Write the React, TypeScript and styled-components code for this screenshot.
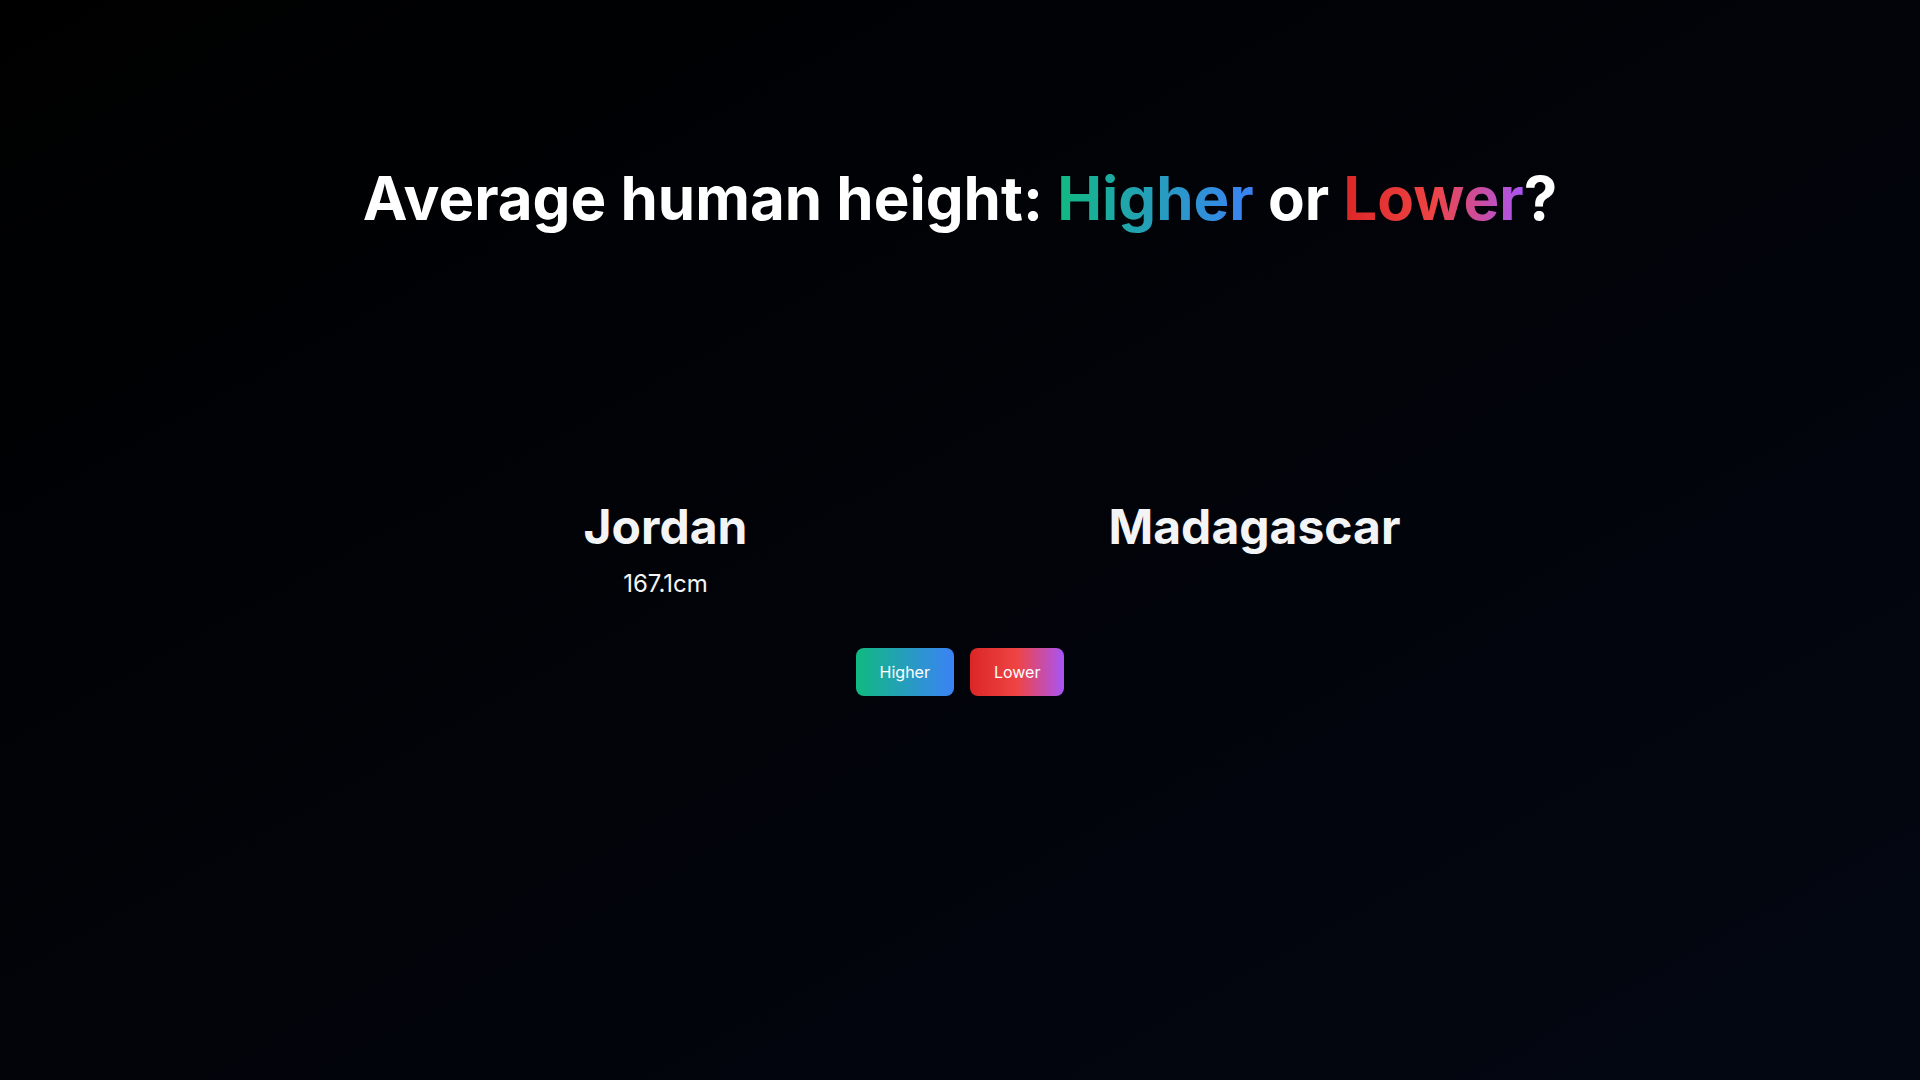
import styled, { createGlobalStyle } from 'styled-components';

const GlobalStyle = createGlobalStyle`
  html, body {
    margin: 0;
    padding: 0;
  }
  body {
    font-family: Inter, "Noto Sans", sans-serif;
    background: #000;
  }
`;

const Page = styled.main`
  min-height: 100vh;
  box-sizing: border-box;
  background: linear-gradient(to bottom right, #000000, #030712);
  color: #ffffff;
  display: flex;
  flex-direction: column;
  align-items: center;
  padding-top: 168px;
`;

const Title = styled.h1`
  margin: 0;
  font-size: 60px;
  line-height: 60px;
  font-weight: 700;
`;

const Accent = styled.span<{ $from: string; $via?: string; $to: string }>`
  background: linear-gradient(
    to right,
    ${(p) => p.$from},
    ${(p) => (p.$via ? `${p.$via},` : '')}
    ${(p) => p.$to}
  );
  -webkit-background-clip: text;
  background-clip: text;
  color: transparent;
`;

const Board = styled.section`
  display: grid;
  grid-template-columns: 589px 589px;
  margin-top: 275px;
`;

const Card = styled.div`
  display: flex;
  flex-direction: column;
  align-items: center;
`;

const Country = styled.h2`
  margin: 0;
  font-size: 48px;
  line-height: 48px;
  font-weight: 700;
  color: #f3f4f6;
`;

const Value = styled.p`
  margin: 17px 0 0;
  font-size: 24px;
  line-height: 32px;
  font-weight: 400;
  color: #f3f4f6;
`;

const Actions = styled.div`
  display: flex;
  gap: 16px;
  margin-top: 48px;
`;

const GuessButton = styled.button<{ $gradient: string }>`
  border: none;
  border-radius: 8px;
  padding: 12px 24px;
  font-family: Inter, "Noto Sans", sans-serif;
  font-size: 16px;
  line-height: 24px;
  color: #ffffff;
  background: ${(p) => p.$gradient};
  cursor: pointer;
`;

export default function App() {
  return (
    <>
      <GlobalStyle />
      <Page>
        <Title>
          Average human height:{' '}
          <Accent $from="#10b981" $to="#3b82f6">Higher</Accent> or{' '}
          <Accent $from="#dc2626" $via="#ef4444" $to="#a855f7">Lower</Accent>?
        </Title>
        <Board>
          <Card>
            <Country>Jordan</Country>
            <Value>167.1cm</Value>
          </Card>
          <Card>
            <Country>Madagascar</Country>
          </Card>
        </Board>
        <Actions>
          <GuessButton $gradient="linear-gradient(to right, #10b981, #3b82f6)">Higher</GuessButton>
          <GuessButton $gradient="linear-gradient(to right, #dc2626, #ef4444, #a855f7)">Lower</GuessButton>
        </Actions>
      </Page>
    </>
  );
}
